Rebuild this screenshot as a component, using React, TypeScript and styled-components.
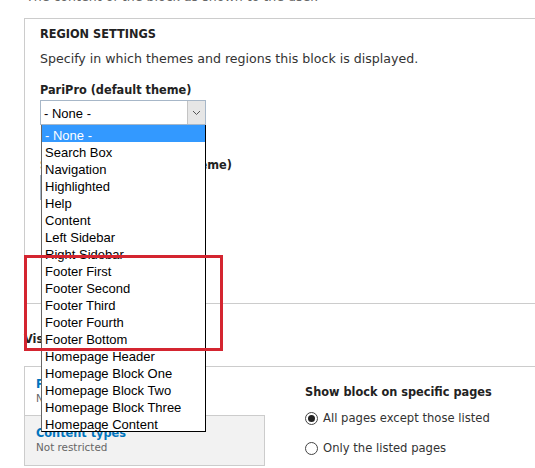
import React from 'react'
import { styled, createGlobalStyle } from 'styled-components'

const GlobalStyle = createGlobalStyle`
body {
  margin: 0;
  background: #fff;
}
`

const regions = [
    "- None -",
    "Search Box",
    "Navigation",
    "Highlighted",
    "Help",
    "Content",
    "Left Sidebar",
    "Right Sidebar",
    "Footer First",
    "Footer Second",
    "Footer Third",
    "Footer Fourth",
    "Footer Bottom",
    "Homepage Header",
    "Homepage Block One",
    "Homepage Block Two",
    "Homepage Block Three",
    "Homepage Content",
]

const Chevron = () => (
    <svg width="9" height="6" viewBox="0 0 9 6">
        <path d="M1 1 L4.5 4.5 L8 1" fill="none" stroke="#555" strokeWidth="1" />
    </svg>
)

const App = () => {
    return (
        <Page>
            <GlobalStyle />
            <Intro>The content of the block as shown to the user.</Intro>

            <Fieldset>
                <Legend>REGION SETTINGS</Legend>
                <Description>Specify in which themes and regions this block is displayed.</Description>

                <Label>PariPro (default theme)</Label>
                <Select>
                    <SelectValue>- None -</SelectValue>
                    <SelectButton><Chevron /></SelectButton>
                </Select>

                <Label $gap={32}>Seven (administration theme)</Label>
                <Select>
                    <SelectValue>- None -</SelectValue>
                    <SelectButton><Chevron /></SelectButton>
                </Select>
            </Fieldset>

            <SectionTitle>Visibility settings</SectionTitle>

            <VerticalTabs>
                <TabList>
                    <Tab $selected>
                        <TabTitle>Pages</TabTitle>
                        <TabSummary>Not restricted</TabSummary>
                    </Tab>
                    <Tab>
                        <TabTitle>Content types</TabTitle>
                        <TabSummary>Not restricted</TabSummary>
                    </Tab>
                </TabList>

                <TabPane>
                    <PaneTitle>Show block on specific pages</PaneTitle>
                    <RadioGroup>
                        <RadioRow>
                            <Radio $checked />
                            All pages except those listed
                        </RadioRow>
                        <RadioRow>
                            <Radio />
                            Only the listed pages
                        </RadioRow>
                    </RadioGroup>
                </TabPane>
            </VerticalTabs>

            <Dropdown>
                {regions.map((r, i) => (
                    <Option key={r} $active={i === 0}>{r}</Option>
                ))}
            </Dropdown>

            <Highlight />
        </Page>
    )
}

export default App

const Page = styled.div`
position: relative;
width: 535px;
height: 468px;
overflow: hidden;
box-sizing: border-box;
padding-left: 24px;
font-family: "DejaVu Sans", Verdana, sans-serif;
font-size: 12.6px;
color: #333;
`

const Intro = styled.div`
margin-top: -12px;
height: 30px;
line-height: 18px;
padding-left: 2px;
color: #666;
`

const Fieldset = styled.div`
box-sizing: border-box;
height: 286px;
border: 1px solid #ccc;
border-right: none;
padding-left: 15px;
`

const Bold = styled.div`
font-weight: 700;
font-stretch: condensed;
line-height: 16px;
color: #222;
`

const Legend = styled(Bold)`
margin-top: 7px;
`

const Description = styled.div`
margin-top: 9px;
line-height: 16px;
`

const Label = styled(Bold) <{ $gap?: number }>`
margin-top: ${p => p.$gap ?? 15}px;
`

const Select = styled.div`
box-sizing: border-box;
margin-top: 2px;
width: 166px;
height: 25px;
display: flex;
align-items: stretch;
border: 1px solid #a7b7c8;
background: #fff;
font-family: "Liberation Sans", Arial, sans-serif;
font-size: 13px;
color: #000;
`

const SelectValue = styled.div`
flex: 1;
display: flex;
align-items: center;
padding: 2px 0 0 3px;
`

const SelectButton = styled.div`
width: 17px;
display: flex;
align-items: center;
justify-content: center;
background: #e6e6e6;
border-left: 1px solid #c4c4c4;
`

const SectionTitle = styled(Bold)`
margin-top: 27px;
`

const VerticalTabs = styled.div`
margin-top: 19px;
display: flex;
border-top: 1px solid #ccc;
`

const TabList = styled.div`
width: 240px;
border-left: 1px solid #ccc;
display: flex;
flex-direction: column;
`

const Tab = styled.div<{ $selected?: boolean }>`
box-sizing: border-box;
height: ${p => p.$selected ? 48 : 51}px;
padding: 9px 11px 0;
background: ${p => p.$selected ? '#fff' : '#f2f2f2'};
border-top: ${p => p.$selected ? 'none' : '1px solid #ccc'};
border-bottom: ${p => p.$selected ? 'none' : '1px solid #ccc'};
border-right: ${p => p.$selected ? 'none' : '1px solid #ccc'};
`

const TabTitle = styled.div`
font-weight: 700;
font-stretch: condensed;
color: #0074bd;
line-height: 15px;
`

const TabSummary = styled.div`
font-size: 10.4px;
color: #666;
line-height: 15px;
`

const TabPane = styled.div`
flex: 1;
padding: 17px 0 0 40px;
`

const PaneTitle = styled(Bold)``

const RadioGroup = styled.div`
margin-top: 3px;
display: flex;
flex-direction: column;
`

const RadioRow = styled.div`
display: flex;
align-items: center;
gap: 5px;
height: 30px;
font-size: 11.6px;
`

const Radio = styled.span<{ $checked?: boolean }>`
box-sizing: border-box;
width: 13px;
height: 13px;
border-radius: 50%;
border: 1px solid #444;
background: #fff;
display: inline-flex;
align-items: center;
justify-content: center;
&::after {
  content: "";
  width: 7px;
  height: 7px;
  border-radius: 50%;
  background: ${p => p.$checked ? '#222' : 'transparent'};
}
`

const Dropdown = styled.div`
position: absolute;
left: 41px;
top: 125px;
width: 165px;
box-sizing: border-box;
border: 1px solid #000;
border-left-color: #666;
border-top: none;
background: #fff;
font-family: "Liberation Sans", Arial, sans-serif;
font-size: 13px;
color: #000;
`

const Option = styled.div<{ $active?: boolean }>`
height: 17px;
line-height: 21px;
padding-left: 3px;
white-space: nowrap;
background: ${p => p.$active ? '#3399ff' : 'transparent'};
color: ${p => p.$active ? '#fff' : '#000'};
`

const Highlight = styled.div`
position: absolute;
left: 24px;
top: 255px;
width: 199px;
height: 96px;
box-sizing: border-box;
border: 3px solid #d42530;
`
